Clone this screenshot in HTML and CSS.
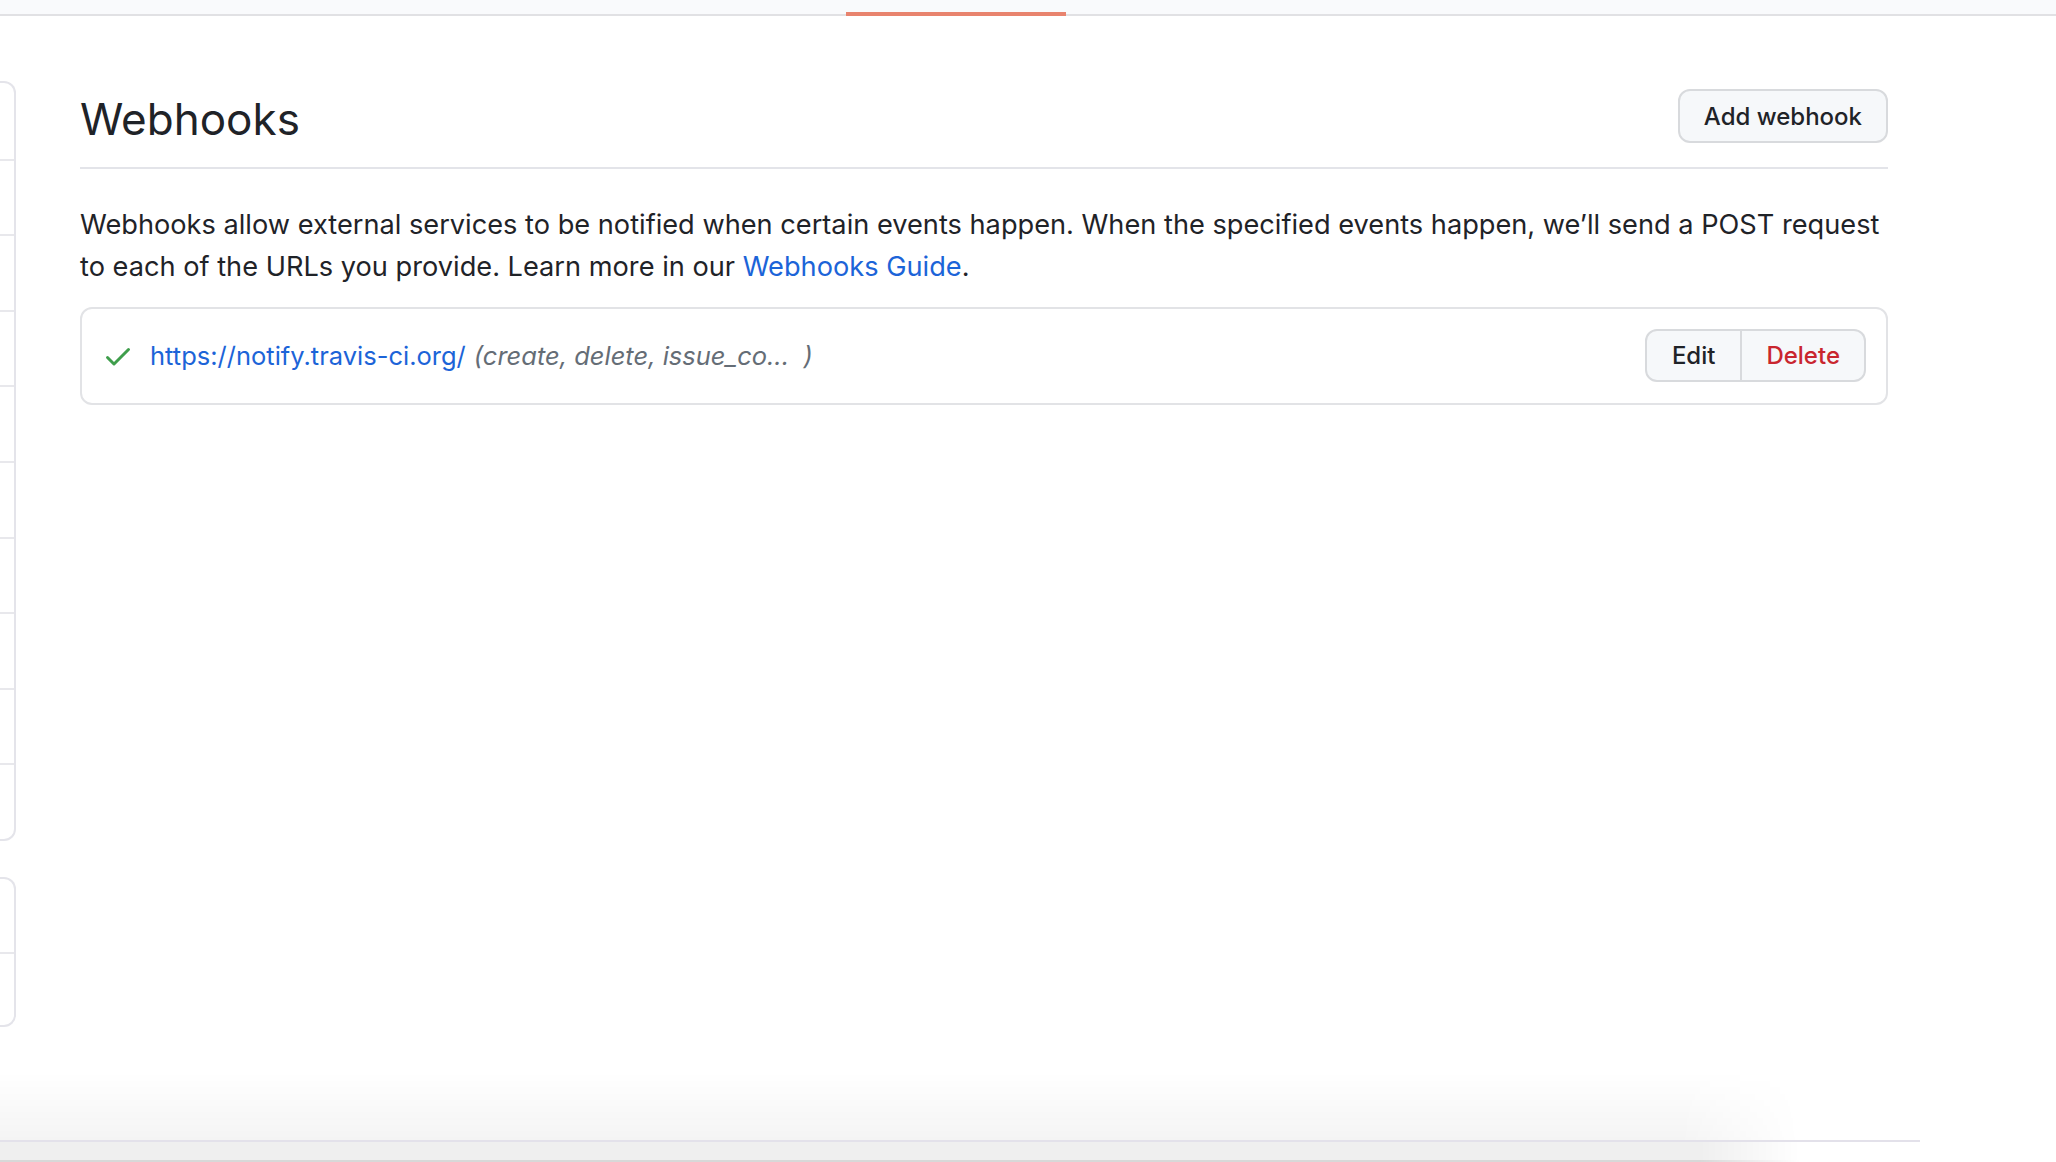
FILE: index.html
```html
<!DOCTYPE html>
<html lang="en">
<head>
<meta charset="utf-8">
<title>Webhooks</title>
<link rel="stylesheet" href="styles.css">
</head>
<body>
<div class="page">
  <div class="topbar">
    <div class="topbar-fill"></div>
    <div class="topbar-line"><div class="topbar-progress"></div></div>
  </div>

  <div class="main">
    <aside class="sidebar">
      <div class="side-box side-box-long">
        <div class="side-item"></div>
        <div class="side-item"></div>
        <div class="side-item"></div>
        <div class="side-item"></div>
        <div class="side-item"></div>
        <div class="side-item"></div>
        <div class="side-item"></div>
        <div class="side-item"></div>
        <div class="side-item"></div>
        <div class="side-item"></div>
      </div>
      <div class="side-box">
        <div class="side-item"></div>
        <div class="side-item"></div>
      </div>
    </aside>

    <section class="content">
      <div class="subhead">
        <h2 class="subhead-title">Webhooks</h2>
        <button class="btn btn-add" type="button">Add webhook</button>
      </div>

      <p class="intro">Webhooks allow external services to be notified when certain events happen. When the specified events happen, we’ll send a POST request to each of the URLs you provide. Learn more in our <a class="link" href="#">Webhooks Guide</a>.</p>

      <div class="hook-box">
        <div class="hook-main">
          <svg class="hook-check" viewBox="0 0 16 16" width="32" height="32" aria-hidden="true"><path d="M13.78 4.22a.75.75 0 0 1 0 1.06l-7.25 7.25a.75.75 0 0 1-1.06 0L2.22 9.28a.75.75 0 0 1 1.06-1.06L6 10.94l6.72-6.72a.75.75 0 0 1 1.06 0Z"/></svg>
          <a class="link hook-url" href="#">https://notify.travis-ci.org/</a>
          <span class="hook-events">(create, delete, issue_co...&nbsp; )</span>
        </div>
        <div class="btn-group">
          <button class="btn btn-group-item btn-edit" type="button">Edit</button>
          <button class="btn btn-group-item btn-danger" type="button">Delete</button>
        </div>
      </div>
    </section>
  </div>

  <div class="bottom">
    <div class="bottom-shade"></div>
    <div class="bottom-rule"></div>
    <div class="bottom-bar"></div>
  </div>
</div>
</body>
</html>
```

FILE: styles.css
```css
* {
  box-sizing: border-box;
}

html, body {
  margin: 0;
  padding: 0;
  background: #ffffff;
}

body {
  font-family: Inter, "Liberation Sans", Arial, sans-serif;
  color: #1f2328;
  overflow: hidden;
}

.page {
  height: 1162px;
  display: flex;
  flex-direction: column;
}

/* top strip */
.topbar {
  display: flex;
  flex-direction: column;
}

.topbar-fill {
  height: 14px;
  background: #f9fafc;
}

.topbar-line {
  height: 2px;
  background: #e1e1e4;
  display: flex;
  align-items: flex-end;
}

.topbar-progress {
  margin-left: 846px;
  width: 220px;
  height: 4px;
  background: #e8836e;
}

/* main area */
.main {
  flex: 1;
  display: flex;
  gap: 64px;
  padding-top: 65px;
}

.sidebar {
  width: 16px;
  flex: none;
  display: flex;
  flex-direction: column;
  gap: 36px;
}

.side-box {
  border: 2px solid #e4e4ea;
  border-left: none;
  border-radius: 0 12px 12px 0;
  background: #ffffff;
}

.side-item {
  height: 73px;
}

.side-item + .side-item {
  border-top: 2px solid #e8e8ec;
}

.side-box-long .side-item {
  height: 75.6px;
}

.content {
  width: 1808px;
  flex: none;
}

.subhead {
  display: flex;
  align-items: center;
  justify-content: space-between;
  padding-top: 8px;
  padding-bottom: 24px;
  border-bottom: 2px solid #e3e4e9;
}

.subhead-title {
  margin: 3px 0 -3px;
  font-size: 44px;
  font-weight: 400;
  line-height: 54px;
  color: #1f2328;
}

.btn {
  font-family: Inter, "Liberation Sans", Arial, sans-serif;
  font-size: 24px;
  font-weight: 500;
  color: #1f2328;
  background: #f6f8fa;
  border: 2px solid #d8dadd;
  border-radius: 12px;
  cursor: pointer;
}

.btn-add {
  height: 54px;
  padding: 0 24px;
}

.intro {
  margin: 35px 0 19px;
  font-size: 27.2px;
  line-height: 42px;
  color: #1f2328;
}

.link {
  color: #1c64d8;
  text-decoration: none;
}

.hook-box {
  display: flex;
  align-items: center;
  justify-content: space-between;
  border: 2px solid #e2e3e6;
  border-radius: 12px;
  padding: 20px 20px 21px 20px;
}

.hook-main {
  display: flex;
  align-items: center;
  font-size: 25.5px;
}

.hook-check {
  fill: #3f9e4c;
  flex: none;
  margin-right: 16px;
}

.hook-url {
  margin-right: 8px;
}

.hook-events {
  font-style: italic;
  color: #656d76;
}

.btn-group {
  display: flex;
}

.btn-group-item {
  height: 53px;
  padding: 0 24px;
}

.btn-edit {
  padding: 0 25px;
}

.btn-group-item:first-child {
  border-radius: 12px 0 0 12px;
}

.btn-group-item + .btn-group-item {
  border-left: none;
  border-radius: 0 12px 12px 0;
}

.btn-danger {
  color: #c9262e;
}

/* bottom fade */
.bottom {
  height: 90px;
  flex: none;
  display: flex;
  flex-direction: column;
}

.bottom-shade {
  height: 68px;
  background: linear-gradient(to bottom, rgba(0,0,0,0) 0%, rgba(0,0,0,0.045) 100%);
  -webkit-mask-image: linear-gradient(to right, #000 0, #000 1680px, transparent 1800px);
  mask-image: linear-gradient(to right, #000 0, #000 1680px, transparent 1800px);
}

.bottom-rule {
  height: 2px;
  width: 1920px;
  background: #e3e1ea;
}

.bottom-bar {
  height: 20px;
  background: #efefef;
  border-bottom: 2px solid #d8d8d8;
  -webkit-mask-image: linear-gradient(to right, #000 0, #000 1700px, transparent 1800px);
  mask-image: linear-gradient(to right, #000 0, #000 1700px, transparent 1800px);
}
```
